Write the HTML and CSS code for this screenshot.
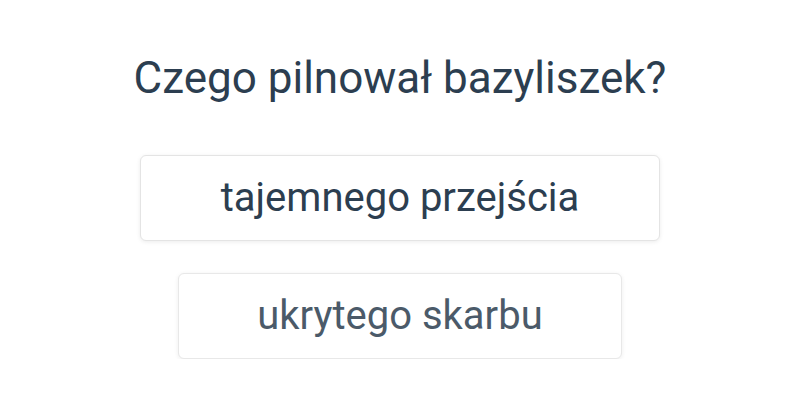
FILE: index.html
```html
<!DOCTYPE html>
<html lang="pl">
<head>
    <meta charset="UTF-8">
    <meta name="viewport" content="width=device-width, initial-scale=1.0">
    <title>Quiz</title>
    <link rel="stylesheet" href="styles.css">
</head>
<body>
    <div class="quiz">
        <h1 class="question">Czego pilnował bazyliszek?</h1>
        <div class="answers">
            <button class="answer">tajemnego przejścia</button>
            <button class="answer answer-fading">ukrytego skarbu</button>
        </div>
    </div>
</body>
</html>
```

FILE: styles.css
```css
body {
    margin: 0;
    font-family: Roboto, "Liberation Sans", sans-serif;
    color: #2c3e50;
    background: #fff;
}

.quiz {
    padding-top: 52px;
    text-align: center;
}

.question {
    margin: 0;
    font-size: 44px;
    font-weight: 400;
    line-height: 52px;
}

.answers {
    display: flex;
    flex-direction: column;
    align-items: center;
    gap: 32px;
    margin-top: 51px;
}

.answer {
    font-family: inherit;
    font-size: 40px;
    line-height: 44px;
    color: #2c3e50;
    background: #fff;
    padding: 20px 80px;
    border: 1px solid #e4e4e4;
    border-radius: 6px;
    box-shadow: 0 1px 4px rgba(0, 0, 0, 0.08);
    cursor: pointer;
}

/* second answer is still fading in */
.answer-fading {
    padding: 20px 78px;
    opacity: 0.85;
}
```
